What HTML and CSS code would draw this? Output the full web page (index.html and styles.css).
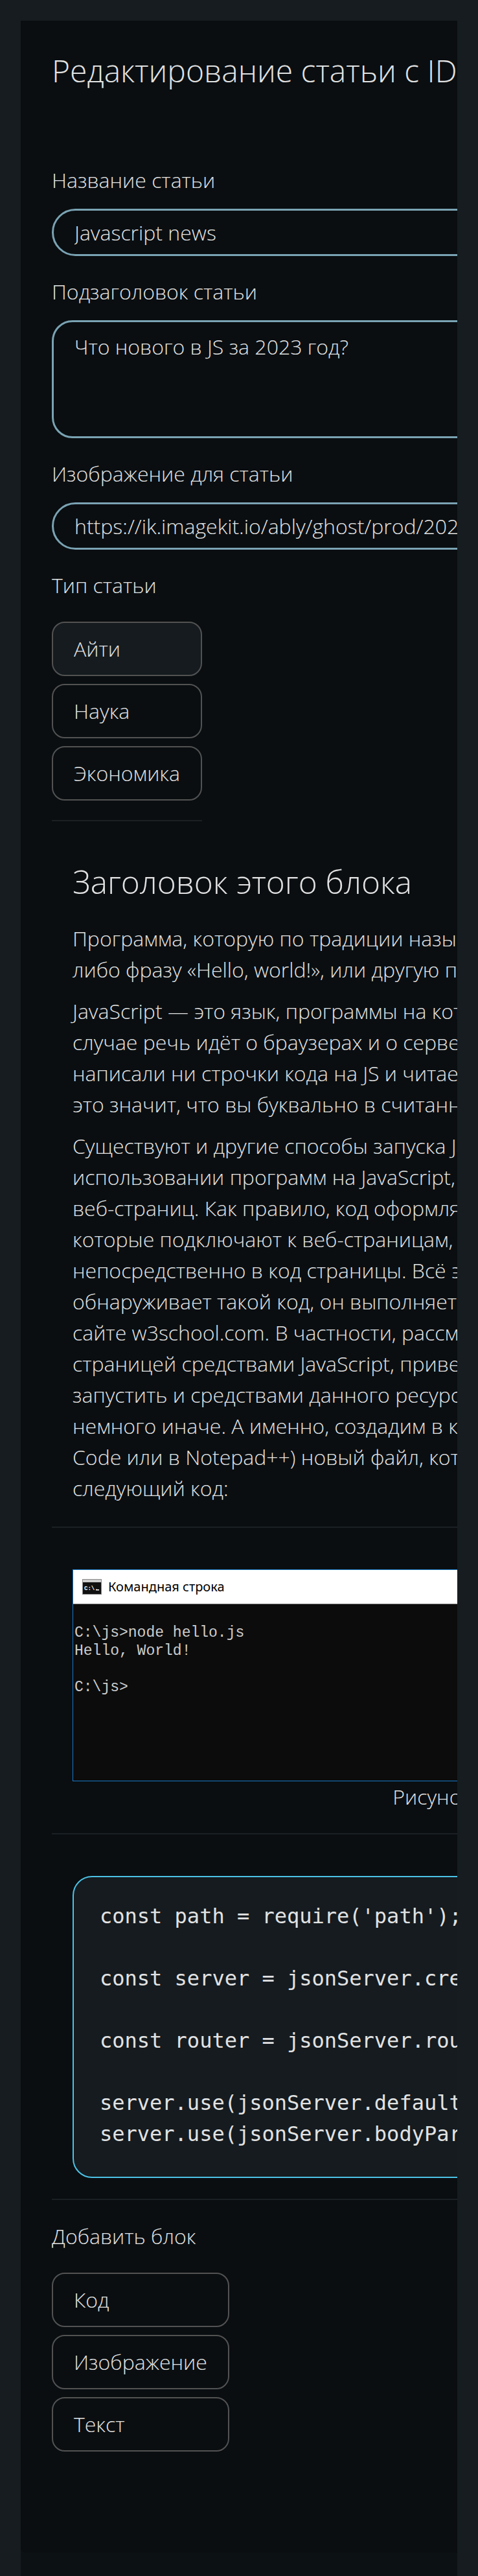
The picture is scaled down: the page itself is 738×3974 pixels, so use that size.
FILE: index.html
```html
<!DOCTYPE html>
<html lang="ru">
<head>
<meta charset="utf-8">
<title>Редактирование статьи</title>
<link rel="stylesheet" href="styles.css">
</head>
<body>
<main class="shell">
  <div class="card">
    <h1 class="page-title">Редактирование статьи с ID 1</h1>

    <form class="article-form">
      <label class="field">
        <span class="field-label">Название статьи</span>
        <input class="field-input" type="text" value="Javascript news">
      </label>
      <label class="field">
        <span class="field-label">Подзаголовок статьи</span>
        <textarea class="field-textarea">Что нового в JS за 2023 год?</textarea>
      </label>
      <label class="field">
        <span class="field-label">Изображение для статьи</span>
        <input class="field-input" type="text" value="https://ik.imagekit.io/ably/ghost/prod/2023/12/javascript-new-features-2023.png">
      </label>
      <div class="field">
        <span class="field-label">Тип статьи</span>
        <div class="choice-list">
          <button type="button" class="choice choice-selected">Айти</button>
          <button type="button" class="choice">Наука</button>
          <button type="button" class="choice">Экономика</button>
          <hr class="choice-divider">
        </div>
      </div>
    </form>

    <section class="blocks">
      <article class="block block-text">
        <h2 class="block-title">Заголовок этого блока</h2>
        <p class="block-paragraph">Программа, которую по традиции называют «Hello, world!», очень проста. Она выводит куда-<br>либо фразу «Hello, world!», или другую подобную, средствами некоего языка.</p>
        <p class="block-paragraph">JavaScript — это язык, программы на котором можно выполнять в разных средах. В нашем<br>случае речь идёт о браузерах и о серверной платформе Node.js. Если до сих пор вы не<br>написали ни строчки кода на JS и читаете этот текст в браузере, работающем на компьютере,<br>это значит, что вы буквально в считанных секундах от своей первой JavaScript-программы.</p>
        <p class="block-paragraph">Существуют и другие способы запуска JavaScript-кода в браузере. Так, если говорить об обычном<br>использовании программ на JavaScript, они загружаются в браузер для обеспечения работы<br>веб-страниц. Как правило, код оформляют в виде отдельных файлов с расширением .js,<br>которые подключают к веб-страницам, но программный код можно включать и<br>непосредственно в код страницы. Всё это делается с помощью тега &lt;script&gt;. Когда браузер<br>обнаруживает такой код, он выполняет его. Подробности о теге script можно посмотреть на<br>сайте w3school.com. В частности, рассмотрим пример, демонстрирующий работу с веб-<br>страницей средствами JavaScript, приведённый на этом ресурсе. Этот пример можно<br>запустить и средствами данного ресурса (ищите кнопку Try it Yourself), но мы поступим<br>немного иначе. А именно, создадим в каком-нибудь текстовом редакторе (например — в VS<br>Code или в Notepad++) новый файл, который назовём hello.html, и добавим в него<br>следующий код:</p>
      </article>

      <article class="block block-image">
        <figure class="figure">
          <div class="cmd-window">
            <div class="cmd-titlebar">
              <svg class="cmd-icon" width="30" height="24" viewBox="0 0 30 24">
                <rect x="0.5" y="0.5" width="29" height="23" fill="#111" stroke="#8a8a8a"/>
                <rect x="1" y="1" width="28" height="4" fill="#cfcfcf"/>
                <text x="3" y="17" font-family="Liberation Mono, monospace" font-size="9" font-weight="bold" fill="#ffffff">C:\.</text>
                <rect x="21" y="16" width="5" height="1.5" fill="#ffffff"/>
              </svg>
              <span class="cmd-title">Командная строка</span>
            </div>
            <pre class="cmd-console">C:\js&gt;node hello.js
Hello, World!

C:\js&gt;</pre>
          </div>
          <figcaption class="figure-caption">Рисунок 1</figcaption>
        </figure>
      </article>

      <article class="block block-code">
        <pre class="code">const path = require('path');

const server = jsonServer.create();

const router = jsonServer.router(path.resolve(__dirname, 'db.json'));

server.use(jsonServer.defaults({}));
server.use(jsonServer.bodyParser);</pre>
      </article>
    </section>

    <div class="add-block">
      <span class="field-label">Добавить блок</span>
      <div class="choice-list">
        <button type="button" class="choice">Код</button>
        <button type="button" class="choice">Изображение</button>
        <button type="button" class="choice">Текст</button>
      </div>
    </div>
  </div>
</main>
</body>
</html>
```

FILE: styles.css
```css
* {
  box-sizing: border-box;
}

html, body {
  margin: 0;
  background: #161c1f;
}

body {
  padding: 32px 32px 0;
  font-family: "Open Sans", "Noto Sans", sans-serif;
  font-weight: 300;
  color: #e2e2e2;
}

.shell {
  width: 674px;
  min-height: calc(100vh - 32px);
  overflow: hidden;
  background: #0c1114;
}

.card {
  width: 1296px;
  padding: 48px 48px 156px;
  background: #0a0e11;
  border-radius: 0 0 8px 8px;
}

.page-title {
  margin: 0 0 116px;
  font-size: 48px;
  font-weight: 300;
  line-height: 1.2;
}

.article-form {
  display: flex;
  flex-direction: column;
  gap: 31px;
}

.field {
  display: flex;
  flex-direction: column;
  gap: 20px;
}

.field-label {
  font-size: 32px;
  line-height: 48px;
}

.field-input,
.field-textarea {
  width: 100%;
  font-family: "Open Sans", "Noto Sans", sans-serif;
  font-weight: 300;
  font-size: 32px;
  line-height: 48px;
  color: #e2e2e2;
  background: transparent;
  border: 3px solid #7aa3b3;
  outline: none;
}

.field-input {
  height: 73px;
  padding: 0 32px;
  border-radius: 40px;
}

.field-textarea {
  height: 182px;
  padding: 14px 32px;
  border-radius: 32px;
  resize: none;
}

.choice-list {
  display: inline-flex;
  flex-direction: column;
  align-self: flex-start;
  gap: 12px;
  margin-top: 12px;
}

.choice {
  padding: 16px 32px;
  font-family: "Open Sans", "Noto Sans", sans-serif;
  font-weight: 300;
  font-size: 32px;
  line-height: 48px;
  text-align: left;
  color: #e2e2e2;
  background: transparent;
  border: 2px solid #525252;
  border-radius: 20px;
}

.choice-selected {
  background: #151b1f;
}

.choice-divider {
  height: 2px;
  margin: 18px 0 0;
  border: 0;
  background: #1a2024;
}

.blocks {
  display: flex;
  flex-direction: column;
  gap: 32px;
  margin-top: 32px;
}

.block {
  padding: 32px;
  border-bottom: 2px solid #1a2024;
}

.block-text {
  padding-bottom: 35px;
}

.block-title {
  margin: 0 0 35px;
  font-size: 49.5px;
  font-weight: 300;
  line-height: 58px;
}

.block-paragraph {
  margin: 0 0 16px;
  font-size: 32px;
  line-height: 48px;
  white-space: nowrap;
}

.block-paragraph:last-child {
  margin-bottom: 0;
}

.figure {
  margin: 0;
}

.cmd-window {
  height: 327px;
  border: 1px solid #1979ca;
  background: #0c0c0c;
}

.cmd-titlebar {
  display: flex;
  align-items: center;
  gap: 10px;
  height: 53px;
  padding: 0 14px;
  background: #ffffff;
  border-bottom: 1px solid #6c6c6c;
}

.cmd-icon {
  flex: none;
}

.cmd-title {
  font-family: "Noto Sans", "Open Sans", sans-serif;
  font-weight: 400;
  font-size: 20px;
  color: #000000;
}

.cmd-console {
  margin: 0;
  padding: 30px 2px;
  font-family: "Liberation Mono", monospace;
  font-size: 23px;
  line-height: 28px;
  color: #cccccc;
}

.figure-caption {
  font-size: 32px;
  line-height: 48px;
  text-align: center;
}

.code {
  margin: 0;
  padding: 36px 40px 42px;
  font-family: "DejaVu Sans Mono", monospace;
  font-size: 32px;
  line-height: 48px;
  color: #e2e2e2;
  background: #151b1f;
  border: 2px solid #4cc2e6;
  border-radius: 30px;
  white-space: pre;
  overflow: hidden;
}

.add-block {
  display: flex;
  flex-direction: column;
  margin-top: 32px;
  gap: 20px;
}
```
